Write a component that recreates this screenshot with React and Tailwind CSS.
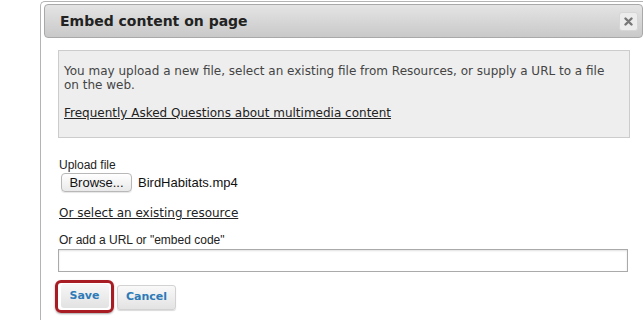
export default function App() {
  return (
    <div className="w-[643px] h-[320px] bg-white overflow-hidden relative">
      <div className="ml-[40px] mt-[1px] h-[330px] w-[620px] border-l border-t border-[#b4b4b4] rounded-tl-[5px] pl-[3px] pt-[2px]">
        {/* Title bar */}
        <div className="h-[34px] w-[599px] rounded-[4px] border border-[#a9a9a9] bg-gradient-to-b from-[#e4e4e4] to-[#c9c9c9] flex items-center justify-between pl-[15px] pr-[4px]">
          <span className="font-['DejaVu_Sans',sans-serif] font-bold text-[14px] text-[#222]">Embed content on page</span>
          <span className="w-[19px] h-[19px] rounded-[3px] bg-[#ececec] border border-[#d6d6d6] flex items-center justify-center">
            <svg width="9" height="9" viewBox="0 0 9 9">
              <path d="M1.5 1.5 L7.5 7.5 M7.5 1.5 L1.5 7.5" stroke="#777" strokeWidth="2.4" strokeLinecap="round" />
            </svg>
          </span>
        </div>
        {/* Info box */}
        <div className="mt-[12px] ml-[14px] w-[572px] h-[88px] bg-[#eeeeee] border border-[#cccccc] pl-[5px] pr-[6px] pt-[13px] font-['DejaVu_Sans',sans-serif] text-[12px] leading-[14px] text-[#444]">
          <p>You may upload a new file, select an existing file from Resources, or supply a URL to a file on the web.</p>
          <p className="mt-[14px]"><a className="underline text-[#222]">Frequently Asked Questions about multimedia content</a></p>
        </div>
        {/* Upload */}
        <div className="ml-[15px] mt-[20px] font-['Liberation_Sans',sans-serif] text-[12px] leading-[14px] text-[#222]">Upload file</div>
        <div className="ml-[17px] mt-[1px] flex items-center">
          <span className="h-[19px] w-[71px] rounded-[4px] border border-[#b8b8b8] bg-gradient-to-b from-[#ffffff] to-[#e9e9e9] flex items-center justify-center font-['Liberation_Sans',sans-serif] text-[13px] text-[#111] shadow-[0_1px_1px_rgba(0,0,0,0.1)]">Browse...</span>
          <span className="ml-[6px] font-['Liberation_Sans',sans-serif] text-[13px] text-[#111]">BirdHabitats.mp4</span>
        </div>
        <div className="ml-[15px] mt-[13px] font-['DejaVu_Sans',sans-serif] text-[12px] leading-[14px] text-[#222]">
          <a className="underline">Or select an existing resource</a>
        </div>
        <div className="ml-[15px] mt-[13px] font-['Liberation_Sans',sans-serif] text-[12px] leading-[14px] text-[#222]">Or add a URL or "embed code"</div>
        <div className="ml-[14px] mt-[2px] w-[570px] h-[23px] border border-[#aaaaaa] bg-white shadow-[inset_0_1px_2px_rgba(0,0,0,0.12)]"></div>
        {/* Buttons */}
        <div className="ml-[11px] mt-[8px] flex items-start">
          <div className="w-[59px] h-[33px] rounded-[6px] border-[3px] border-[#a81c24] flex items-center justify-center shadow-[0_1px_2px_rgba(0,0,0,0.35)]">
            <span className="w-[48px] h-[24px] rounded-[3px] bg-gradient-to-b from-[#f7f7f7] to-[#e2e2e2] flex items-center justify-center font-['DejaVu_Sans',sans-serif] font-bold text-[11px] text-[#2d7ab8]">Save</span>
          </div>
          <span className="ml-[3px] mt-[5px] w-[59px] h-[25px] rounded-[3px] border border-[#d2d2d2] bg-gradient-to-b from-[#f9f9f9] to-[#e3e3e3] shadow-[0_1px_1px_rgba(0,0,0,0.15)] flex items-center justify-center font-['DejaVu_Sans',sans-serif] font-bold text-[11px] text-[#2d7ab8]">Cancel</span>
        </div>
      </div>
    </div>
  );
}
